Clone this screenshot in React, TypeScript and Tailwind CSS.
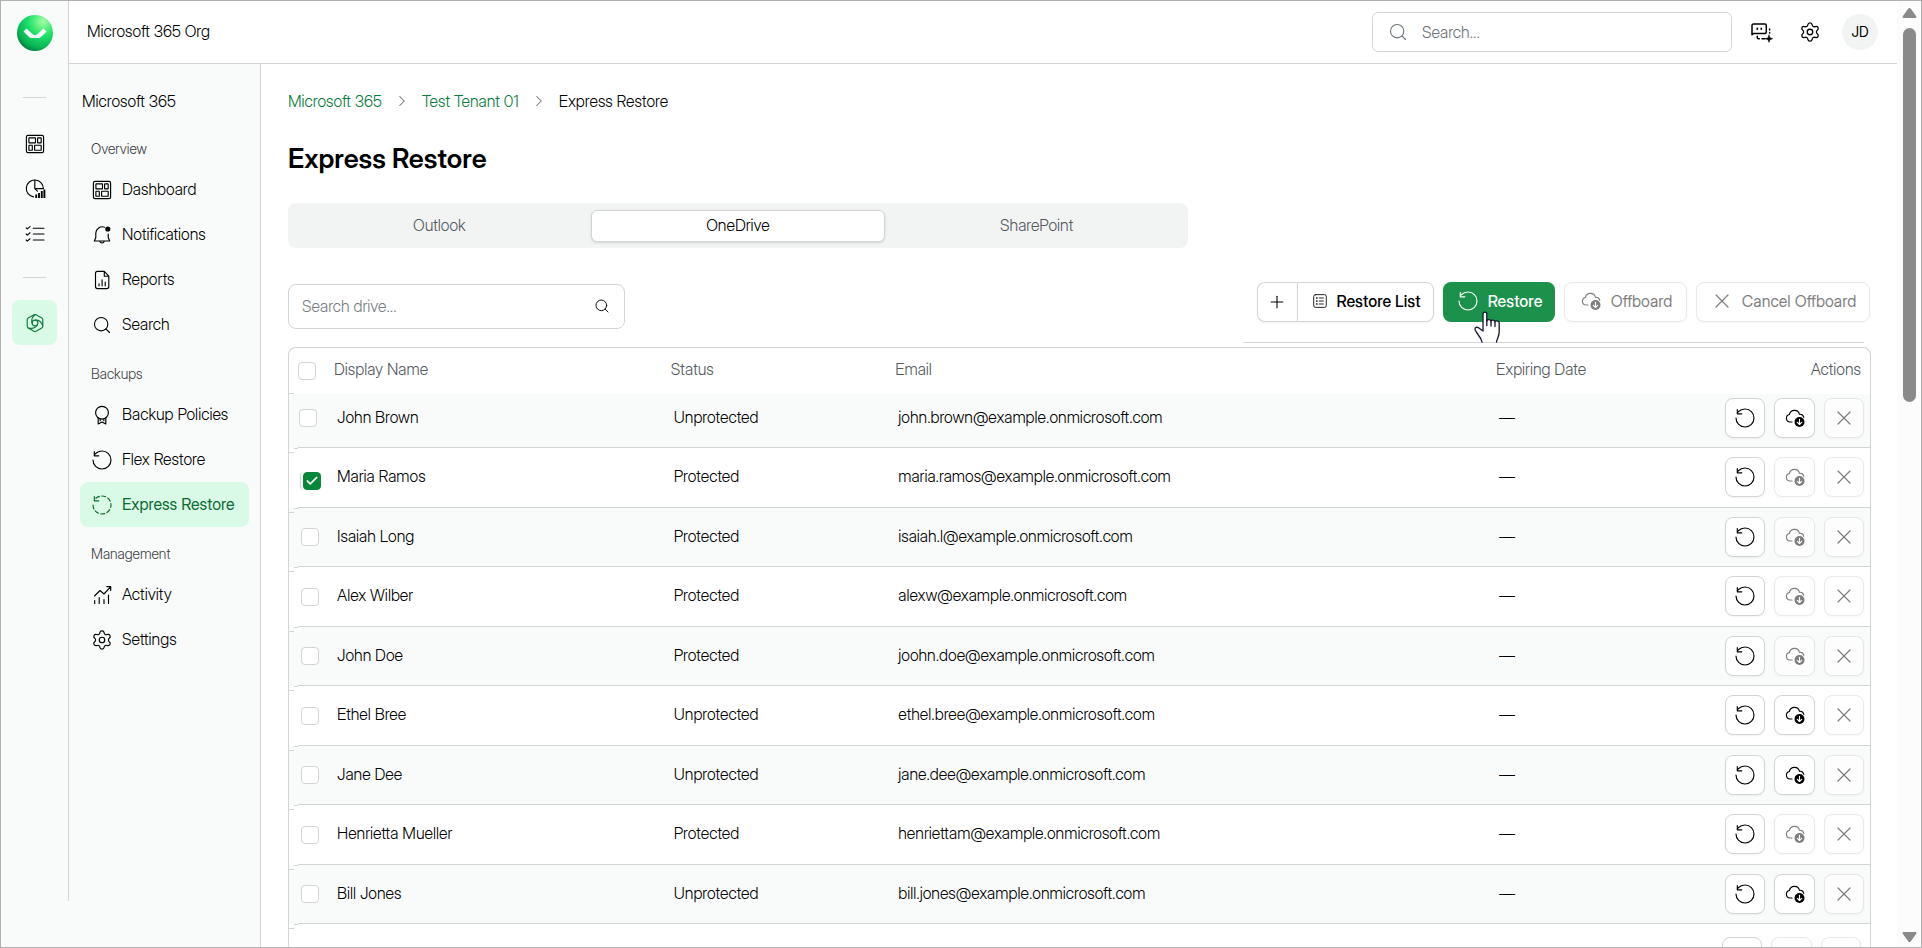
import type { ReactNode } from 'react';
import { Check, ChevronRight, Plus, Search, Settings, X } from 'lucide-react';
import { clsx } from 'clsx';

type IconProps = { className?: string };

const people = [
    { name: 'John Brown', status: 'Unprotected', email: 'john.brown@example.onmicrosoft.com' },
    { name: 'Maria Ramos', status: 'Protected', email: 'maria.ramos@example.onmicrosoft.com', checked: true },
    { name: 'Isaiah Long', status: 'Protected', email: 'isaiah.l@example.onmicrosoft.com' },
    { name: 'Alex Wilber', status: 'Protected', email: 'alexw@example.onmicrosoft.com' },
    { name: 'John Doe', status: 'Protected', email: 'joohn.doe@example.onmicrosoft.com' },
    { name: 'Ethel Bree', status: 'Unprotected', email: 'ethel.bree@example.onmicrosoft.com' },
    { name: 'Jane Dee', status: 'Unprotected', email: 'jane.dee@example.onmicrosoft.com' },
    { name: 'Henrietta Mueller', status: 'Protected', email: 'henriettam@example.onmicrosoft.com' },
    { name: 'Bill Jones', status: 'Unprotected', email: 'bill.jones@example.onmicrosoft.com' },
];

function Svg({ className = 'size-6', children }: { className?: string; children: ReactNode }) {
    return (
        <svg
            viewBox="0 0 24 24"
            fill="none"
            stroke="currentColor"
            strokeWidth="1.15"
            strokeLinecap="round"
            strokeLinejoin="round"
            className={clsx('shrink-0', className)}
            aria-hidden="true"
        >
            {children}
        </svg>
    );
}

function DashboardIcon({ className }: IconProps) {
    return (
        <Svg className={className}>
            <rect x="3.4" y="3.4" width="17.2" height="17.2" rx="1.6" />
            <rect x="5.9" y="5.9" width="6.6" height="4.9" rx="0.3" />
            <rect x="14.6" y="5.9" width="3.6" height="4.9" rx="0.3" />
            <rect x="5.9" y="13.2" width="3.4" height="5" rx="0.3" />
            <rect x="11.6" y="13.2" width="6.6" height="5" rx="0.3" />
        </Svg>
    );
}

function PieIcon() {
    return (
        <Svg>
            <path d="M10.5 19.9A8.5 8.5 0 1 1 20.3 11.5" />
            <path d="M11.8 3.2v8.4h8.4M11.8 11.6l2.6 2.6" />
            <path d="M13.2 17.5v3.5M16 16v5M18.8 14v7M21.4 12.5v8.5" strokeWidth="1.9" strokeLinecap="butt" />
        </Svg>
    );
}

function ChecklistIcon() {
    return (
        <Svg>
            <path d="M3.2 5.8l1.1 1.1L7 4.6M3.2 12l1.1 1.1L7 10.8M3.2 18l1.1 1.1L7 16.8M10.3 6.2H21M10.3 12H21M10.3 18H21" />
        </Svg>
    );
}

function HexIcon() {
    return (
        <Svg>
            <path d="M11 3.8a2 2 0 0 1 2 0l5.8 3.2a2 2 0 0 1 1 1.7v6.6a2 2 0 0 1-1 1.7L13 20.2a2 2 0 0 1-2 0L5.2 17a2 2 0 0 1-1-1.7V8.7a2 2 0 0 1 1-1.7z" />
            <circle cx="12" cy="12" r="2.9" />
            <path d="M9.2 12.5C8 9 9 6 12 3.8M12.500 9.100c3-.3 5.700 1.500 7.100 5.200M14.300 13.800c-1.600 3-5 4.200-9 3.300" />
        </Svg>
    );
}

function BellIcon() {
    return (
        <Svg>
            <path d="M14.5 4.200A6.500 6.500 0 0 0 5.800 10v4.500L4.300 18h15.400l-1.500-3.500V11M9.800 18.300a2.300 2.300 0 0 0 4.400 0" />
            <circle cx="17.8" cy="6" r="2" fill="currentColor" />
        </Svg>
    );
}

function ReportIcon() {
    return (
        <Svg>
            <path d="M7.5 3.400h6.800l4.500 4.800v10.400a2 2 0 0 1-2 2H7.500a2 2 0 0 1-2-2V5.400a2 2 0 0 1 2-2zM14.300 3.600v4.600h4.400" />
            <path d="M9 15.800v2M12.100 11.800v6M15.200 14v3.800" />
        </Svg>
    );
}

function AwardIcon() {
    return (
        <Svg>
            <circle cx="12" cy="9.7" r="6.4" />
            <path d="M8.200 15v6l3.800-2 3.800 2v-6M10.200 16.500v1.200M13.800 16.500v1.200" />
        </Svg>
    );
}

function RestoreIcon({ className, dashed }: IconProps & { dashed?: boolean }) {
    return (
        <Svg className={className}>
            <path d="M3 12a9 9 0 1 0 9-9 9.750 9.750 0 0 0-6.740 2.740L4.500 7" strokeDasharray={dashed ? '4 2.4' : undefined} />
            <path d="M4.300 3.500v4.300h4.500" />
        </Svg>
    );
}

function ActivityIcon() {
    return (
        <Svg>
            <path d="M4.500 13l5.500-5.500 4 3.500L20.500 3.800M16.800 3.600h3.900v3.900" />
            <path d="M4.700 17.500v3M9.200 14.500v6M14 16.500v4M18.500 12v8.500" />
        </Svg>
    );
}

function ListIcon() {
    return (
        <Svg className="size-[18px]">
            <rect x="3.6" y="3.5" width="16.8" height="17" rx="2.5" />
            <path d="M11 8h5.500M11 12h5.500M11 16h5.500" />
            <path d="M7.500 8h.6M7.500 12h.6M7.500 16h.6" strokeWidth="1.8" />
        </Svg>
    );
}

function CloudIcon({ className }: IconProps) {
    return (
        <Svg className={className}>
            <path d="M9 16H7a3.800 3.800 0 0 1-.6-7.500A5.200 5.200 0 0 1 16.500 8.300a4 4 0 0 1 4.300 3" />
            <circle cx="16.5" cy="16" r="5" fill="currentColor" stroke="none" />
            <path d="M16.500 13.300v5M14.300 16.300l2.200 2.200 2.200-2.200" stroke="white" />
        </Svg>
    );
}

function ChatIcon() {
    return (
        <Svg>
            <path d="M3 14.800V5.500a1.500 1.500 0 0 1 1.500-1.500h11.300a1.500 1.500 0 0 1 1.500 1.500v6.500a1.500 1.500 0 0 1-1.500 1.500H4.500zM20.600 9v1M20.600 12.500v.5M8.300 16.300v1.400a1 1 0 0 0 1 1h1M13 18.700h3" strokeWidth="1.5" />
            <path d="M8.300 8.300v.7M12.300 8.300v.7" strokeWidth="1.8" />
            <path d="M20 15l1 2.700 2.700 1-2.700 1L20 22.400l-1-2.700-2.700-1 2.700-1z" fill="currentColor" strokeWidth="0.5" />
        </Svg>
    );
}

function Logo() {
    return (
        <svg viewBox="0 0 36 36" className="size-9" role="img" aria-label="Home">
            <defs>
                <radialGradient id="logo" cx="0.72" cy="0.18" r="0.9">
                    <stop offset="0" stopColor="#a4ffa0" />
                    <stop offset="0.45" stopColor="#1fdf68" />
                    <stop offset="0.8" stopColor="#08b755" />
                    <stop offset="1" stopColor="#077a43" />
                </radialGradient>
            </defs>
            <circle cx="18" cy="18" r="18" fill="url(#logo)" />
            <path d="M6.500 16.500l3-3 6.200 5.800a3.400 3.400 0 0 0 4.600 0l6.200-5.800 3 3-5.300 5.300a4 4 0 0 1-2.800 1.200h-6.800a4 4 0 0 1-2.800-1.200z" fill="#fff" />
        </svg>
    );
}

function Hand() {
    return (
        <svg viewBox="0 0 28 32" className="absolute top-[29px] left-[31px] h-8 w-7" fill="white" stroke="#15152b" strokeWidth="1.3" strokeLinejoin="round" strokeLinecap="round" aria-hidden="true">
            <path d="M8 31c-.5-3-2-5-4-7.500C2.500 21.500 1 19.500 1 18c0-1.800 2-2.200 3.500-1.200L9 20V3c0-2.600 3.800-2.600 3.800 0v7c0-2 4-2 4.200.3 0-1.800 3.800-1.600 4 .6 0-1.700 4-1.600 4.200 1V21c0 4-2 6-2.700 10" />
            <path d="M12.800 9v5.500M17 10.500V15M21 11v4.500" fill="none" />
        </svg>
    );
}

const sections = [
    {
        title: 'Overview',
        items: [
            { label: 'Dashboard', icon: <DashboardIcon /> },
            { label: 'Notifications', icon: <BellIcon /> },
            { label: 'Reports', icon: <ReportIcon /> },
            { label: 'Search', icon: <Search className="mx-0.5 size-5" strokeWidth={1.3} /> },
        ],
    },
    {
        title: 'Backups',
        items: [
            { label: 'Backup Policies', icon: <AwardIcon /> },
            { label: 'Flex Restore', icon: <RestoreIcon /> },
            { label: 'Express Restore', icon: <RestoreIcon dashed />, active: true },
        ],
    },
    {
        title: 'Management',
        items: [
            { label: 'Activity', icon: <ActivityIcon /> },
            { label: 'Settings', icon: <Settings className="mx-px size-[22px]" strokeWidth={1.3} /> },
        ],
    },
];

function Rail() {
    const item = 'flex h-[45px] w-[45px] items-center justify-center rounded-lg';
    return (
        <div className="w-[68px] shrink-0 bg-[#f9fbfa]">
            <nav aria-label="Main" className="flex h-[900px] w-[68px] flex-col items-center border-r border-[#d2d5d5] pt-3.5">
                <a href="#home"><Logo /></a>
                <hr className="mt-[46px] mb-[23px] w-[23px] border-[#d2d5d5]" />
                <a href="#dashboard" aria-label="Dashboard" className={item}><DashboardIcon /></a>
                <a href="#reports" aria-label="Analytics" className={item}><PieIcon /></a>
                <a href="#tasks" aria-label="Tasks" className={item}><ChecklistIcon /></a>
                <hr className="mt-[21px] mb-[22px] w-[23px] border-[#d2d5d5]" />
                <a href="#m365" aria-label="Microsoft 365" className={clsx(item, 'bg-[#d9fae6] text-[#0f7a3c]')}><HexIcon /></a>
            </nav>
        </div>
    );
}

function Sidebar() {
    return (
        <nav aria-label="Microsoft 365" className="w-48 shrink-0 border-r border-[#d2d5d5] bg-[#f9fbfa] px-[11px]">
            <h2 className="flex h-[58px] items-center pt-4 pl-0.5">Microsoft 365</h2>
            {sections.map((section) => (
                <div key={section.title}>
                    <h3 className="flex h-[45px] items-center pt-2 pl-[11px] text-sm text-[#3c4043]">{section.title}</h3>
                    {section.items.map((item) => (
                        <a
                            key={item.label}
                            href="#nav"
                            className={clsx(
                                'flex h-[45px] items-center gap-2 rounded-lg pl-2.5 whitespace-nowrap',
                                item.active && 'bg-[#d9fae6] font-normal text-[#0b6b33]',
                            )}
                        >
                            {item.icon}
                            <span className="pb-px">{item.label}</span>
                        </a>
                    ))}
                </div>
            ))}
        </nav>
    );
}

function TopBar() {
    return (
        <header className="flex h-[63px] shrink-0 items-center border-b border-[#d2d5d5] pr-[19px] pl-[18px]">
            <h1 className="flex-1 pb-0.5">Microsoft 365 Org</h1>
            <label className="flex h-10 w-[360px] items-center gap-3.5 rounded-md border border-[#d2d5d5] pl-[15px] text-[#6b7378]">
                <Search className="size-5 shrink-0" strokeWidth={1.3} />
                <input type="search" aria-label="Search" placeholder="Search..." className="w-full bg-transparent outline-none placeholder:text-[#6c7276]" />
            </label>
            <button aria-label="Assistant" className="ml-[17px]"><ChatIcon /></button>
            <button aria-label="Settings" className="ml-[26px]"><Settings className="size-[22px]" strokeWidth={1.4} /></button>
            <button className="ml-[21px] size-9 rounded-full bg-[#f2f4f3] text-sm font-normal">JD</button>
        </header>
    );
}

const boxed = 'flex h-10 items-center justify-center rounded-lg border border-[#d2d5d5] bg-white shadow-xs whitespace-nowrap';

function Toolbar() {
    return (
        <div className="mt-[34px] flex h-[65px] items-start justify-between pr-px">
            <label className="mt-0.5 flex h-[45px] w-[337px] items-center rounded-lg border border-[#d2d5d5] pr-3.5 pb-px pl-[13px]">
                <input type="search" aria-label="Search drive" placeholder="Search drive..." className="w-full bg-transparent outline-none placeholder:text-[#777c7f]" />
                <Search className="size-4 shrink-0" strokeWidth={1.4} />
            </label>
            <div>
                <div className="flex gap-[9px] font-medium">
                    <div className="flex">
                        <button aria-label="Add" className={clsx(boxed, 'w-10 rounded-r-none border-r-0 pr-px')}><Plus className="size-5" strokeWidth={1.3} /></button>
                        <button className={clsx(boxed, 'w-[137px] gap-2 rounded-l-none pb-0.5')}><ListIcon />Restore List</button>
                    </div>
                    <div className="relative">
                        <button className="flex h-10 w-28 items-center justify-center gap-2 rounded-lg bg-[#1c914b] pb-0.5 text-white"><RestoreIcon />Restore</button>
                        <Hand />
                    </div>
                    <button disabled className={clsx(boxed, 'w-[123px] gap-2 pb-0.5 font-normal opacity-50')}><CloudIcon />Offboard</button>
                    <button disabled className={clsx(boxed, 'w-[174px] gap-2 pb-0.5 font-normal opacity-50')}><X className="size-6" strokeWidth={1.2} />Cancel Offboard</button>
                </div>
                <hr className="mt-5 mr-[6px] -ml-3.5 border-[#d2d5d5]" />
            </div>
        </div>
    );
}

function Tick({ checked, label }: { checked?: boolean; label: string }) {
    return (
        <span className="relative block size-[18px]">
            <input
                type="checkbox"
                aria-label={label}
                defaultChecked={checked}
                className="peer block size-[18px] appearance-none rounded-[4px] border border-[#d2d5d5] bg-white checked:border-[#07873a] checked:bg-[#07873a] checked:shadow-[-2px_0_0_#fafbfb,-3px_0_0_#d2d5d5]"
            />
            <Check className="pointer-events-none absolute top-0.5 left-0.5 hidden size-3.5 text-white peer-checked:block" strokeWidth={3} />
        </span>
    );
}

function Actions({ canOffboard }: { canOffboard: boolean }) {
    return (
        <div className="flex justify-end gap-[9px]">
            <button aria-label="Restore" className={clsx(boxed, 'w-10')}><RestoreIcon /></button>
            <button aria-label="Offboard" disabled={!canOffboard} className={clsx(boxed, 'w-[41px] disabled:opacity-50')}><CloudIcon /></button>
            <button aria-label="Cancel offboard" disabled className={clsx(boxed, 'w-10 opacity-50')}><X className="size-6" strokeWidth={1.2} /></button>
        </div>
    );
}

// Row separators step down towards the left edge of the table.
function SteppedLine() {
    return (
        <>
            <span className="absolute right-0 bottom-0 left-[9px] h-px bg-[#d2d5d5]" />
            <span className="absolute -bottom-px left-[5px] h-px w-1 bg-[#d2d5d5]" />
            <span className="absolute -bottom-[5px] left-0 h-px w-[5px] bg-[#d2d5d5]" />
        </>
    );
}

function DriveTable() {
    const head = 'pb-1 font-[350]';
    const cell = 'border-b border-[#d2d5d5] pl-[3px]';
    const textCell = clsx(cell, 'pb-[3px] group-first:pb-2');
    return (
        <div className="rounded-t-lg border border-b-0 border-[#d2d5d5]">
            <table className="w-full table-fixed border-separate border-spacing-0 text-left">
                <thead>
                    <tr className="h-[46px] text-[#53595e]">
                        <th className="relative w-[45px] pl-[9px]">
                            <Tick label="Select all" />
                            <span className="absolute bottom-0 left-0 h-px w-[5px] bg-[#d2d5d5]" />
                        </th>
                        <th className={clsx(head, 'w-[21.3%]')}>Display Name</th>
                        <th className={clsx(head, 'w-[14.2%]')}>Status</th>
                        <th className={clsx(head, 'w-[38%]')}>Email</th>
                        <th className={head}>Expiring Date</th>
                        <th className={clsx(head, 'pr-[9px] text-right')}>Actions</th>
                    </tr>
                </thead>
                <tbody>
                    {people.map((person) => (
                        <tr key={person.email} className="group h-[59px] odd:bg-[#f9fbfa] even:h-[60px] first:h-[54px]">
                            <td className={clsx('relative group-first:pb-[7px]', person.checked ? 'pt-[5px] pl-[14px]' : 'pb-px pl-3 group-first:pl-2.5')}>
                                <Tick checked={person.checked} label={`Select ${person.name}`} />
                                <SteppedLine />
                            </td>
                            <td className={textCell}>{person.name}</td>
                            <td className={textCell}>{person.status}</td>
                            <td className={textCell}>{person.email}</td>
                            <td className={textCell}>—</td>
                            <td className={clsx(cell, 'pr-1.5 pb-px group-first:pb-[6px]')}><Actions canOffboard={person.status === 'Unprotected'} /></td>
                        </tr>
                    ))}
                    <tr>
                        <td colSpan={6} className="pt-[13px] pr-[9px]"><Actions canOffboard={false} /></td>
                    </tr>
                </tbody>
            </table>
        </div>
    );
}

function ScrollTrack() {
    return (
        <div className="flex w-6 shrink-0 flex-col items-center bg-[#fcfcfc] pt-1.5 pb-1">
            <svg viewBox="0 0 15 12" className="h-3 w-[15px]" fill="#8a8a8a"><path d="M6.300 1.600L.8 9.300c-.7 1 0 1.700 1 1.700h11.400c1 0 1.700-.7 1-1.700L8.700 1.600c-.7-.9-1.700-.9-2.400 0z" /></svg>
            <div className="mt-[9px] h-[374px] w-[13px] rounded-full bg-[#8a8a8a]" />
            <svg viewBox="0 0 15 12" className="mt-auto h-3 w-[15px] rotate-180" fill="#8a8a8a"><path d="M6.300 1.600L.8 9.300c-.7 1 0 1.700 1 1.700h11.400c1 0 1.700-.7 1-1.700L8.700 1.600c-.7-.9-1.700-.9-2.400 0z" /></svg>
        </div>
    );
}

export default function App() {
    return (
        <div className="flex h-screen overflow-hidden border border-[#b0b0b0] bg-white font-['Inter_Display','Inter','Liberation_Sans',sans-serif] text-base leading-6 font-[350] text-black [font-variation-settings:'opsz'_32]">
            <Rail />
            <div className="flex min-w-0 flex-1 flex-col">
                <TopBar />
                <div className="flex min-h-0 flex-1">
                    <Sidebar />
                    <main className="min-w-0 flex-1 overflow-hidden pt-[25px] pr-[26px] pl-[27px]">
                        <nav aria-label="Breadcrumb" className="flex h-6 items-center gap-[11px] text-[#087a39]">
                            <a href="#m365">Microsoft 365</a>
                            <ChevronRight className="size-[18px] text-[#6b7378]" strokeWidth={1.4} />
                            <a href="#tenant">Test Tenant 01</a>
                            <ChevronRight className="size-[18px] text-[#6b7378]" strokeWidth={1.4} />
                            <span className="text-black">Express Restore</span>
                        </nav>
                        <h2 className="mt-7 text-[27px] leading-9 font-semibold">Express Restore</h2>
                        <div role="tablist" className="mt-[26px] grid h-[45px] max-w-[900px] grid-cols-3 items-center gap-1 rounded-lg bg-[#f2f4f3] px-1 text-[#53595e]">
                            <button role="tab" className="h-8 pb-px">Outlook</button>
                            <button role="tab" aria-selected="true" className="h-8 rounded-md border border-[#d2d5d5] bg-white pb-px text-black shadow-sm">OneDrive</button>
                            <button role="tab" className="h-8 pb-px">SharePoint</button>
                        </div>
                        <Toolbar />
                        <DriveTable />
                    </main>
                </div>
            </div>
            <ScrollTrack />
        </div>
    );
}
